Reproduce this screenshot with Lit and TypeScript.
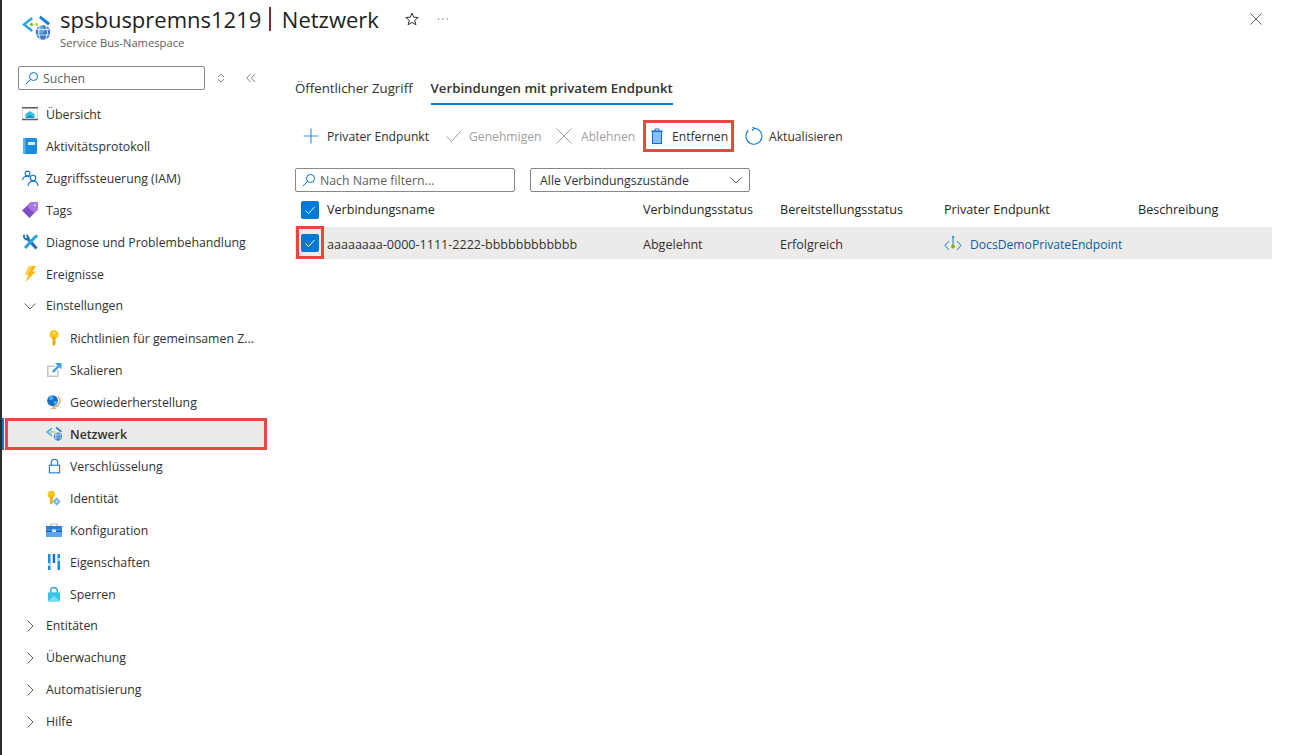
import { LitElement, html, css } from "lit";
import { customElement } from "lit/decorators.js";

const netIcon = (s: number) => html`<svg width=${s} height=${s} viewBox="0 0 28 28">
  <path d="M9.500 3 0 10.500 9.500 18l1.500-2L4 10.500 11 5z" fill="#27a9e8"/>
  <path d="M18.500 1.500 28 9l-2 2.500-9-7.500z" fill="#1a7fd4"/>
  <circle cx="9.500" cy="10.300" r="1.600" fill="#7fba00"/><circle cx="14.500" cy="10.300" r="1.600" fill="#b8d432"/>
  <circle cx="21" cy="18.500" r="7.300" fill="#3b78c6"/>
  <circle cx="19" cy="16" r="3.500" fill="#6ea6e6"/>
  <path d="M14.500 15.500h13M14 21h14M18.500 11.500c-2.500 4-2.500 10 0 14M23.500 11.500c2.500 4 2.500 10 0 14" stroke="#d6e7f8" stroke-width="1.100" fill="none"/>
</svg>`;

const icons: Record<string, unknown> = {
  overview: html`<svg width="16" height="16" viewBox="0 0 16 16"><path d="M0 1h16v13H0z" fill="#c8c6c4" opacity=".55"/><path d="M1 2.500h14v10H1z" fill="#fff"/><path d="M3.500 12V8L8 5l4.500 3v4z" fill="#32bedd"/><path d="M3.500 12 8 9l4.500 3z" fill="#1490df"/><path d="M0 1h16v1.500H0zM0 12.800h16V14.300H0z" fill="#605e5c"/></svg>`,
  log: html`<svg width="14" height="16" viewBox="0 0 14 16"><rect width="14" height="16" rx="1.500" fill="#1c8ce0"/><rect width="2.500" height="16" rx="1" fill="#5ab4f0"/><rect x="5" y="4" width="7" height="3" fill="#d9eefc"/></svg>`,
  iam: html`<svg width="17" height="16" viewBox="0 0 17 16" fill="none" stroke="#0f6fd1" stroke-width="1.100"><circle cx="5.500" cy="3.500" r="2.400"/><path d="M.6 10c.4-2.500 2.400-3.700 4.900-3.700 1 0 1.600.2 2.200.5"/><circle cx="11" cy="8" r="2.700"/><path d="M6 16c.3-3 2.300-4.800 5-4.800s4.800 1.800 5 4.800"/></svg>`,
  tag: html`<svg width="16" height="16" viewBox="0 0 16 16"><path d="M9 0h5a2 2 0 0 1 2 2v5.500L7.500 16 0 8.500z" fill="#7f4fc9"/><path d="M9 0h5a2 2 0 0 1 2 2v5.500L12 11 5 4z" fill="#a67ae0"/><circle cx="12.800" cy="3.300" r="1" fill="#e8dcfa"/></svg>`,
  tools: html`<svg width="15" height="16" viewBox="0 0 15 16" fill="none"><path d="M4 4l9.500 10.500" stroke="#1c6fb8" stroke-width="3"/><path d="M1 .8 1 3.500 3 5.500 5.500 3.500 3.500 1" stroke="#1c6fb8" stroke-width="1.800"/><path d="M13 2 2 14" stroke="#2ba3dc" stroke-width="3"/><path d="M11.500 2 14 .5 15 2 13.500 4z" fill="#2ba3dc"/></svg>`,
  bolt: html`<svg width="12" height="16" viewBox="0 0 12 16"><path d="M5 0h7L8.500 5.500H12L1.500 16l3-7.500H1z" fill="#fcb714"/><path d="M5 0h3L4 8.500H1z" fill="#fdd04e"/></svg>`,
  key: html`<svg width="12" height="16" viewBox="0 0 12 16"><circle cx="6" cy="4.500" r="4.500" fill="#f8c81e"/><path d="M4.500 7h3v7L6 16l-1.500-1.500z" fill="#eba90d"/><circle cx="6" cy="3" r="1.100" fill="#fff2b3"/></svg>`,
  scale: html`<svg width="16" height="16" viewBox="0 0 16 16"><path d="M1 3.500h8V5H2.500v8.500H11V8h1.500v7H1z" fill="#c4c4c4"/><path d="M9 1h6.500v6.500L13.300 5.300 7.500 11 6 9l5.500-5.500z" fill="#3ba4ec"/></svg>`,
  geo: html`<svg width="14" height="16" viewBox="0 0 15 16"><path d="M12 2a6.500 6.500 0 0 1-6 11" fill="none" stroke="#e8a35c" stroke-width="1.300"/><path d="M4 15.300h6v-1H7.500v-1.500h-1v1.500H4z" fill="#e89a4d"/><circle cx="6" cy="6.500" r="5.800" fill="#1670c4"/><path d="M3 2c2-1 4 0 4 1.500S5 6 3.500 6 1.500 3 3 2zm5 5c2-.5 3 0 2.500 2S8 11.500 7.500 10 7 7.500 8 7z" fill="#45b2ea"/></svg>`,
  net: netIcon(16),
  lock: html`<svg width="13" height="16" viewBox="0 0 15 17" fill="none" stroke="#0f6fd1" stroke-width="1.200"><rect x="1.600" y="7.600" width="11.800" height="8.800"/><path d="M3.800 7.500V4.500a3.700 3.700 0 0 1 7.400 0v3"/></svg>`,
  ident: html`<svg width="14" height="16" viewBox="0 0 16 17"><circle cx="5" cy="4.500" r="4.300" fill="#f8c81e"/><path d="M3.500 7h3v7.500L5 16l-1.500-1.500z" fill="#eba90d"/><path d="M11 8l4.500 4.500L11 17l-4.500-4.500z" fill="#5ea9e6"/><path d="M11 10.500l2 2-2 2-2-2z" fill="#d2e8fa"/></svg>`,
  conf: html`<svg width="16" height="14" viewBox="0 0 16 14"><path d="M5 3V1h6v2" fill="none" stroke="#b9b9b9" stroke-width="1.200"/><rect y="3" width="16" height="11" fill="#5ea3ea"/><rect y="3" width="16" height="3.500" fill="#2a7fd6"/><path d="M0 7.500h16V9H0z" fill="#1566b8"/><rect x="6" y="6.500" width="4" height="2.500" fill="#d9ecfb"/></svg>`,
  props: html`<svg width="12" height="16" viewBox="0 0 12 16"><rect width="2.500" height="16" fill="#1a8fdf"/><rect x="4.700" width="2.500" height="9" fill="#1a6ec7"/><rect x="9.500" width="2.500" height="16" fill="#1a8fdf"/><rect y="9" width="2.500" height="3" fill="#a9e2f6"/><rect x="9.500" y="4" width="2.500" height="3" fill="#a9e2f6"/></svg>`,
  padlock: html`<svg width="12" height="16" viewBox="0 0 13 16"><path d="M3 7V4.500a3.500 3.500 0 0 1 7 0V7" fill="none" stroke="#2aa6d6" stroke-width="1.500"/><rect y="6" width="13" height="10" rx="1" fill="#3cc3e6"/><path d="M0 16l6.500-6 6.500 6z" fill="#7fdcf2"/></svg>`,
};

const chevDown = html`<svg class="chev" width="16" height="16" viewBox="0 0 16 16" fill="none" stroke="#605e5c" stroke-width="1"><path d="M2.500 5.500 8 11l5.500-5.500"/></svg>`;
const chevRight = html`<svg class="chev" width="16" height="16" viewBox="0 0 16 16" fill="none" stroke="#605e5c" stroke-width="1"><path d="M5.500 2.500 11 8l-5.500 5.500"/></svg>`;
const search = (c: string) => html`<svg width="14" height="14" viewBox="0 0 14 14" fill="none" stroke=${c} stroke-width="1"><circle cx="8.500" cy="5.500" r="4"/><path d="M5.500 8.500.8 13.200"/></svg>`;
const check = html`<svg width="12" height="12" viewBox="0 0 12 12" fill="none" stroke="#fff" stroke-width="1"><path d="M1.500 6.500 4.500 9.500 10.500 3"/></svg>`;

type Item = { t: string; i?: string; chev?: "d" | "r"; sub?: boolean; sel?: boolean };
const items: Item[] = [
  { t: "Übersicht", i: "overview" }, { t: "Aktivitätsprotokoll", i: "log" },
  { t: "Zugriffssteuerung (IAM)", i: "iam" }, { t: "Tags", i: "tag" },
  { t: "Diagnose und Problembehandlung", i: "tools" }, { t: "Ereignisse", i: "bolt" },
  { t: "Einstellungen", chev: "d" },
  { t: "Richtlinien für gemeinsamen Z...", i: "key", sub: true }, { t: "Skalieren", i: "scale", sub: true },
  { t: "Geowiederherstellung", i: "geo", sub: true }, { t: "Netzwerk", i: "net", sub: true, sel: true },
  { t: "Verschlüsselung", i: "lock", sub: true }, { t: "Identität", i: "ident", sub: true },
  { t: "Konfiguration", i: "conf", sub: true }, { t: "Eigenschaften", i: "props", sub: true },
  { t: "Sperren", i: "padlock", sub: true },
  { t: "Entitäten", chev: "r" }, { t: "Überwachung", chev: "r" }, { t: "Automatisierung", chev: "r" }, { t: "Hilfe", chev: "r" },
];

@customElement("app-root")
export class AppRoot extends LitElement {
  static styles = css`
    :host { display: block; width: 1292px; height: 755px; box-sizing: border-box; border-left: 2px solid #2b2b2b; background: #fff; overflow: hidden;
      font-family: "Open Sans", "Noto Sans", sans-serif; font-size: 12.300px; color: #323130; }
    .head { display: flex; height: 56px; padding-left: 20px; padding-right: 29px; align-items: flex-start; box-sizing: border-box; }
    .logo { margin-top: 14px; width: 38px; flex: none; }
    .titles { display: flex; flex-direction: column; }
    .title-line { display: flex; align-items: center; height: 38px; font-size: 22px; color: #201f1e; white-space: nowrap; }
    .bar { width: 1.500px; height: 24px; background: #7a2d2d; margin: 0 11px 0 8px; }
    .subtitle { font-size: 11.200px; color: #605e5c; margin-top: -2px; line-height: 14px; }
    .star { margin: 0 0 0 26px; display: flex; }
    .more { margin-left: 18px; display: flex; }
    .close { margin-left: auto; margin-top: 12px; }
    .body { display: flex; }
    .side { width: 270px; flex: none; }
    .searchrow { display: flex; align-items: center; padding: 10px 0 8px 16px; }
    .sbox { width: 187px; height: 24px; box-sizing: border-box; border: 1px solid #8a8886; border-radius: 2px; display: flex; align-items: center; gap: 4px; padding-left: 6px; color: #605e5c; }
    .sort { margin-left: 12px; display: flex; }
    .coll { margin-left: 21px; display: flex; }
    .row { height: 32px; display: flex; align-items: center; box-sizing: border-box; padding-left: 16px; white-space: nowrap; }
    .row.short { padding-bottom: 1px; }
    .row.sub { padding-left: 40px; }
    .ic { width: 28px; display: flex; align-items: center; justify-content: center; flex: none; box-sizing: border-box; padding: 0 8px 0 4px; }
    .ic svg { display: block; flex: none; }
    .chevwrap { width: 28px; flex: none; display: flex; padding-left: 4px; box-sizing: border-box; }
    .row.sel { background: #edebe9; font-weight: 600; border-left: 2px solid #0078d4; padding-left: 38px; position: relative; margin-right: 5px; }
    .row.sel::after { content: ""; position: absolute; left: 1px; right: 0; top: 0; bottom: 0; border: 3px solid #e8473f; }
    .main { flex: 1; padding: 11px 20px 0 23px; min-width: 0; }
    .tabs { display: flex; gap: 18px; height: 38px; }
    .tab { height: 36px; padding-top: 5px; box-sizing: border-box; display: flex; align-items: center; color: #323130; white-space: nowrap; font-size: 13.250px; }
    .tab.on { height: 38px; border-bottom: 2px solid #0078d4; font-weight: 600; padding-top: 5px; font-size: 13.250px; }
    .tools { display: flex; align-items: center; height: 32px; margin-top: 15px; white-space: nowrap; font-size: 12.150px; }
    .tbtn { display: flex; align-items: center; height: 32px; box-sizing: border-box; flex: none; }
    .dis { color: #a19f9d; }
    .boxed { border: 3px solid #e8473f; padding-left: 4px; }
    .filters { display: flex; gap: 15px; margin-top: 16px; }
    .field { width: 220px; height: 24px; box-sizing: border-box; border: 1px solid #8a8886; border-radius: 2px; display: flex; align-items: center; }
    .field.f1 { padding-left: 6px; gap: 4px; color: #605e5c; }
    .field.f2 { padding: 0 5px 0 9px; justify-content: space-between; }
    .grid { display: grid; grid-template-columns: 32px 316px 137px 164px 194px 134px; }
    .cell { display: flex; align-items: center; white-space: nowrap; }
    .hd { font-weight: 500; color: #201f1e; height: 35px; font-size: 12.600px; }
    .rw { height: 32px; background: #edebe9; font-size: 12.550px; padding-top: 2px; box-sizing: border-box; }
    .cb { width: 18px; height: 18px; background: #0078d4; border-radius: 2px; display: flex; align-items: center; justify-content: center; margin-left: 6px; position: relative; }
    .rw .cb { top: -1px; }
    .cb.red::after { content: ""; position: absolute; left: -5px; top: -8px; width: 22px; height: 27px; border: 3px solid #e8473f; }
    .link { color: #0f5ea8; display: flex; align-items: center; gap: 8px; font-size: 12.150px; }
  `;

  private row(it: Item) {
    const cls = `row ${it.sub ? "sub" : ""} ${it.sel ? "sel" : ""} ${it.chev ? "short" : ""}`;
    return html`<div class=${cls}>
      ${it.chev
        ? html`<span class="chevwrap">${it.chev === "d" ? chevDown : chevRight}</span>`
        : html`<span class="ic">${icons[it.i as string]}</span>`}
      <span>${it.t}</span>
    </div>`;
  }

  render() {
    return html`
      <div class="head">
        <div class="logo">${netIcon(28)}</div>
        <div class="titles">
          <div class="title-line">
            <span>spsbuspremns1219</span><span class="bar"></span><span>Netzwerk</span>
            <span class="star"><svg width="14" height="14" viewBox="0 0 14 14" fill="none" stroke="#323130" stroke-width="1"><path d="M7 1l1.700 4.200 4.500.3-3.500 2.900 1.200 4.400L7 10.400l-3.900 2.400 1.200-4.400L.8 5.500l4.500-.3z"/></svg></span>
            <span class="more"><svg width="12" height="4" viewBox="0 0 12 4" fill="#8a8886"><circle cx="1.500" cy="2" r=".8"/><circle cx="6" cy="2" r=".8"/><circle cx="10.500" cy="2" r=".8"/></svg></span>
          </div>
          <div class="subtitle">Service Bus-Namespace</div>
        </div>
        <div class="close"><svg width="14" height="14" viewBox="0 0 14 14" fill="none" stroke="#605e5c" stroke-width="1"><path d="M1.500 1.500l11 11M12.500 1.500l-11 11"/></svg></div>
      </div>
      <div class="body">
        <div class="side">
          <div class="searchrow">
            <div class="sbox">${search("#0078d4")}<span>Suchen</span></div>
            <span class="sort"><svg width="8" height="10" viewBox="0 0 8 10" fill="none" stroke="#8a8886"><path d="M1 4l3-3 3 3M1 6l3 3 3-3"/></svg></span>
            <span class="coll"><svg width="10" height="10" viewBox="0 0 10 10" fill="none" stroke="#8a8886"><path d="M4.500 1 .8 5l3.700 4M9 1 5.300 5 9 9"/></svg></span>
          </div>
          ${items.map((i) => this.row(i))}
        </div>
        <div class="main">
          <div class="tabs">
            <div class="tab">Öffentlicher Zugriff</div>
            <div class="tab on">Verbindungen mit privatem Endpunkt</div>
          </div>
          <div class="tools">
            <div class="tbtn" style="width:151px;padding-left:8px">
              <svg width="16" height="16" viewBox="0 0 16 16" fill="none" stroke="#3a96dd" stroke-width="1.200"><path d="M8 .5v15M.5 8h15"/></svg>
              <span style="margin-left:8px">Privater Endpunkt</span>
            </div>
            <div class="tbtn dis" style="width:110px">
              <svg width="16" height="14" viewBox="0 0 16 14" fill="none" stroke="#a19f9d" stroke-width="1"><path d="M.7 7.500 5.500 12.500 15.300 1.500"/></svg>
              <span style="margin-left:7px">Genehmigen</span>
            </div>
            <div class="tbtn dis" style="width:87px">
              <svg width="16" height="16" viewBox="0 0 16 16" fill="none" stroke="#a19f9d" stroke-width="1"><path d="M.5.500l15 15M15.500.500l-15 15"/></svg>
              <span style="margin-left:9px">Ablehnen</span>
            </div>
            <div class="tbtn boxed" style="width:91px">
              <svg width="14" height="16" viewBox="0 0 14 16"><path d="M1 3h12M5 3V1h4v2" fill="none" stroke="#0f6fd1" stroke-width="1"/><rect x="2.500" y="3.500" width="9" height="12" fill="#83c3f0" stroke="#0f6fd1"/></svg>
              <span style="margin-left:8px">Entfernen</span>
            </div>
            <div class="tbtn" style="margin-left:11px">
              <svg width="18" height="18" viewBox="0 0 18 18" fill="none" stroke="#0f78d4" stroke-width="1.100"><path d="M8.500 1.200A8 8 0 1 1 3.300 3.500"/><path d="M7 3.500 9.200 1.300 7 -.8"/></svg>
              <span style="margin-left:6px">Aktualisieren</span>
            </div>
          </div>
          <div class="filters">
            <div class="field f1">${search("#0078d4")}<span>Nach Name filtern...</span></div>
            <div class="field f2"><span>Alle Verbindungszustände</span>${chevDown}</div>
          </div>
          <div class="grid">
            <div class="cell hd"><span class="cb">${check}</span></div>
            <div class="cell hd">Verbindungsname</div>
            <div class="cell hd">Verbindungsstatus</div>
            <div class="cell hd">Bereitstellungsstatus</div>
            <div class="cell hd">Privater Endpunkt</div>
            <div class="cell hd">Beschreibung</div>
            <div class="cell rw"><span class="cb red">${check}</span></div>
            <div class="cell rw">aaaaaaaa-0000-1111-2222-bbbbbbbbbbbb</div>
            <div class="cell rw">Abgelehnt</div>
            <div class="cell rw">Erfolgreich</div>
            <div class="cell rw"><span class="link"><svg width="18" height="18" viewBox="0 0 18 18" fill="none"><path d="M5 6 1 10.500 5 15M13 6l4 4.500-4 4.500" stroke="#3a9bd5" stroke-width="1.100"/><path d="M9 2v10" stroke="#3a9bd5" stroke-width="1.300"/><circle cx="9" cy="2" r="1.300" fill="#3a9bd5"/><circle cx="9" cy="11.500" r="2" fill="#7fba00"/></svg>DocsDemoPrivateEndpoint</span></div>
            <div class="cell rw"></div>
          </div>
        </div>
      </div>
    `;
  }
}
